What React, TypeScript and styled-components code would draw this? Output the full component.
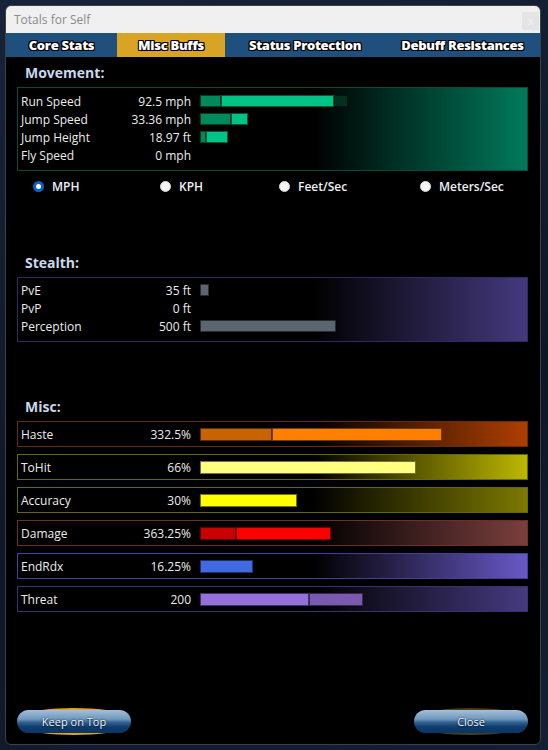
import React from 'react';
import styled, { createGlobalStyle } from 'styled-components';

const GlobalStyle = createGlobalStyle`
  html, body {
    margin: 0;
    padding: 0;
    background: #111b2b;
  }
  body {
    font-family: "Open Sans", "Liberation Sans", sans-serif;
  }
`;

const Page = styled.div`
  width: 548px;
  height: 750px;
  padding: 5px 0 0 5px;
  box-sizing: border-box;
  background: linear-gradient(160deg, #17233a 0%, #0e1726 60%, #131f33 100%);
`;

const Window = styled.div`
  width: 536px;
  height: 740px;
  box-sizing: border-box;
  display: flex;
  flex-direction: column;
  border: 1px solid #3a414d;
  border-radius: 6px;
  overflow: hidden;
  background: #000;
`;

const TitleBar = styled.div`
  height: 27px;
  flex: none;
  display: flex;
  align-items: center;
  padding-left: 8px;
  background: #f0f0f0;
  color: #8a8a8a;
  font-size: 12px;
`;

const CloseBox = styled.div`
  margin-left: auto;
  margin-right: 1px;
  width: 17px;
  height: 18px;
  margin-top: 3px;
  background: #e4e4e4;
  color: #f7f7f7;
  font-size: 10px;
  display: flex;
  align-items: center;
  justify-content: center;
`;

const TabBar = styled.div`
  height: 24px;
  flex: none;
  display: grid;
  grid-template-columns: 111px 108px 160px 1fr;
  background: #1f4f7c;
`;

const Tab = styled.div<{ $active?: boolean }>`
  display: flex;
  align-items: center;
  justify-content: center;
  background: ${({ $active }) => ($active ? '#d9a424' : 'transparent')};
  color: #fff;
  font-size: 13px;
  font-weight: 800;
  letter-spacing: -0.3px;
  text-shadow: 1px 0 0 #000, -1px 0 0 #000, 0 1px 0 #000, 0 -1px 0 #000,
    1px 1px 0 #000, -1px -1px 0 #000, 1px -1px 0 #000, -1px 1px 0 #000;
`;

const Content = styled.div`
  flex: 1;
  display: flex;
  flex-direction: column;
  padding: 0 12px 11px 11px;
`;

const Heading = styled.div<{ $gap: number }>`
  margin-top: ${({ $gap }) => $gap}px;
  margin-left: 8px;
  height: 18px;
  line-height: 18px;
  margin-bottom: 5px;
  font-size: 14px;
  font-weight: 700;
  color: #c9d8ec;
`;

const StatBox = styled.div<{ $border: string; $tint: string; $padTop: number }>`
  border: 1px solid ${({ $border }) => $border};
  padding: ${({ $padTop }) => $padTop}px 0 6px 3px;
  background: linear-gradient(90deg, #000 0%, #000 58%, ${({ $tint }) => $tint} 100%);
`;

const Row = styled.div`
  height: 18px;
  display: flex;
  align-items: center;
  font-size: 12px;
  color: #ececec;
`;

const Label = styled.div`
  width: 100px;
  flex: none;
  white-space: nowrap;
`;

const Value = styled.div`
  width: 70px;
  flex: none;
  text-align: right;
  white-space: nowrap;
`;

const Bar = styled.div<{ $h: number }>`
  margin-left: 9px;
  height: ${({ $h }) => $h}px;
  display: flex;
`;

const Segment = styled.div<{ $color: string }>`
  height: 100%;
  box-sizing: border-box;
  background: ${({ $color }) => $color};
  border: 1px solid rgba(0, 0, 0, 0.55);
`;

const RadioRow = styled.div`
  height: 20px;
  margin-top: 5px;
  padding-left: 16px;
  display: grid;
  grid-template-columns: 127px 119px 141px 1fr;
  align-items: center;
`;

const RadioItem = styled.div`
  display: flex;
  align-items: center;
  gap: 8px;
  font-size: 12px;
  font-weight: 600;
  color: #eef2f7;
`;

const RadioDot = styled.span<{ $on?: boolean }>`
  width: 11px;
  height: 11px;
  border-radius: 50%;
  box-sizing: border-box;
  background: ${({ $on }) => ($on ? '#fff' : '#f4f4f4')};
  border: ${({ $on }) => ($on ? '3.5px solid #0a62c4' : '1px solid #d8d8d8')};
`;

const MiscList = styled.div`
  display: flex;
  flex-direction: column;
  gap: 7px;
`;

const MiscBox = styled.div<{ $border: string; $tint: string }>`
  height: 26px;
  box-sizing: border-box;
  display: flex;
  align-items: center;
  padding-left: 3px;
  border: 1px solid ${({ $border }) => $border};
  font-size: 12px;
  color: #ececec;
  background: linear-gradient(90deg, #000 0%, #000 58%, ${({ $tint }) => $tint} 100%);
`;

const Footer = styled.div`
  margin-top: auto;
  display: flex;
  justify-content: space-between;
  align-items: center;
`;

const ButtonLayer = styled.div`
  position: relative;
  z-index: 0;
`;

const PillButton = styled.div<{ $glow: string }>`
  position: relative;
  width: 114px;
  height: 23px;
  border-radius: 12px;
  display: flex;
  align-items: center;
  justify-content: center;
  font-size: 11px;
  color: #f4f7fb;
  text-shadow: 0 0 2px #0a2440, 0 1px 1px #0a2440;
  background: linear-gradient(180deg, #a4c0da 0%, #6f97bc 40%, #2f5f8e 55%, #0d3c6c 75%, #0b3564 100%);

  &::before {
    content: '';
    position: absolute;
    top: -2px;
    bottom: -2px;
    left: 14px;
    right: 14px;
    border-radius: 50% / 6px;
    background: linear-gradient(
      90deg,
      transparent 0%,
      ${({ $glow }) => $glow} 14%,
      ${({ $glow }) => $glow} 86%,
      transparent 100%
    );
    z-index: -1;
  }
`;

type Seg = [number, string];

const movement: { label: string; value: string; segs: Seg[] }[] = [
  { label: 'Run Speed', value: '92.5 mph', segs: [[21, '#008a5c'], [113, '#00c385'], [14, '#03301f']] },
  { label: 'Jump Speed', value: '33.36 mph', segs: [[31, '#008a5c'], [17, '#00c385']] },
  { label: 'Jump Height', value: '18.97 ft', segs: [[6, '#008a5c'], [22, '#00c385']] },
  { label: 'Fly Speed', value: '0 mph', segs: [] },
];

const stealth: { label: string; value: string; segs: Seg[] }[] = [
  { label: 'PvE', value: '35 ft', segs: [[9, '#5b6570']] },
  { label: 'PvP', value: '0 ft', segs: [] },
  { label: 'Perception', value: '500 ft', segs: [[136, '#5b6570']] },
];

const misc: { label: string; value: string; border: string; tint: string; segs: Seg[] }[] = [
  { label: 'Haste', value: '332.5%', border: '#6e2a08', tint: '#ad3f00', segs: [[72, '#c86400'], [170, '#ff8000']] },
  { label: 'ToHit', value: '66%', border: '#66660a', tint: '#bdb800', segs: [[216, '#ffff80']] },
  { label: 'Accuracy', value: '30%', border: '#66660a', tint: '#7c7a00', segs: [[97, '#ffff00']] },
  { label: 'Damage', value: '363.25%', border: '#6a3030', tint: '#7a3f3d', segs: [[36, '#c80000'], [95, '#ff0000']] },
  { label: 'EndRdx', value: '16.25%', border: '#4a3c9a', tint: '#6858c6', segs: [[53, '#4169e1']] },
  { label: 'Threat', value: '200', border: '#3a3072', tint: '#463a80', segs: [[109, '#9370db'], [54, '#7a5aae']] },
];

const Segs: React.FC<{ segs: Seg[]; h: number }> = ({ segs, h }) => (
  <Bar $h={h}>
    {segs.map(([w, c], i) => (
      <Segment key={i} $color={c} style={{ width: w }} />
    ))}
  </Bar>
);

const App: React.FC = () => {
  return (
    <>
      <GlobalStyle />
      <Page>
        <Window>
          <TitleBar>
            Totals for Self
            <CloseBox>x</CloseBox>
          </TitleBar>
          <TabBar>
            <Tab>Core Stats</Tab>
            <Tab $active>Misc Buffs</Tab>
            <Tab>Status Protection</Tab>
            <Tab>Debuff Resistances</Tab>
          </TabBar>
          <Content>
            <Heading $gap={7}>Movement:</Heading>
            <StatBox $border="#0b4a38" $tint="#007a5c" $padTop={4}>
              {movement.map((r) => (
                <Row key={r.label}>
                  <Label>{r.label}</Label>
                  <Value>{r.value}</Value>
                  <Segs segs={r.segs} h={12} />
                </Row>
              ))}
            </StatBox>
            <RadioRow>
              <RadioItem>
                <RadioDot $on />
                MPH
              </RadioItem>
              <RadioItem>
                <RadioDot />
                KPH
              </RadioItem>
              <RadioItem>
                <RadioDot />
                Feet/Sec
              </RadioItem>
              <RadioItem>
                <RadioDot />
                Meters/Sec
              </RadioItem>
            </RadioRow>

            <Heading $gap={58}>Stealth:</Heading>
            <StatBox $border="#33295e" $tint="#45397f" $padTop={3}>
              {stealth.map((r) => (
                <Row key={r.label}>
                  <Label>{r.label}</Label>
                  <Value>{r.value}</Value>
                  <Segs segs={r.segs} h={12} />
                </Row>
              ))}
            </StatBox>

            <Heading $gap={56}>Misc:</Heading>
            <MiscList>
              {misc.map((r) => (
                <MiscBox key={r.label} $border={r.border} $tint={r.tint}>
                  <Label>{r.label}</Label>
                  <Value>{r.value}</Value>
                  <Segs segs={r.segs} h={13} />
                </MiscBox>
              ))}
            </MiscList>

            <Footer>
              <ButtonLayer>
                <PillButton $glow="#e3a21f">Keep on Top</PillButton>
              </ButtonLayer>
              <ButtonLayer>
                <PillButton $glow="#4a3d1c">Close</PillButton>
              </ButtonLayer>
            </Footer>
          </Content>
        </Window>
      </Page>
    </>
  );
};

export default App;
